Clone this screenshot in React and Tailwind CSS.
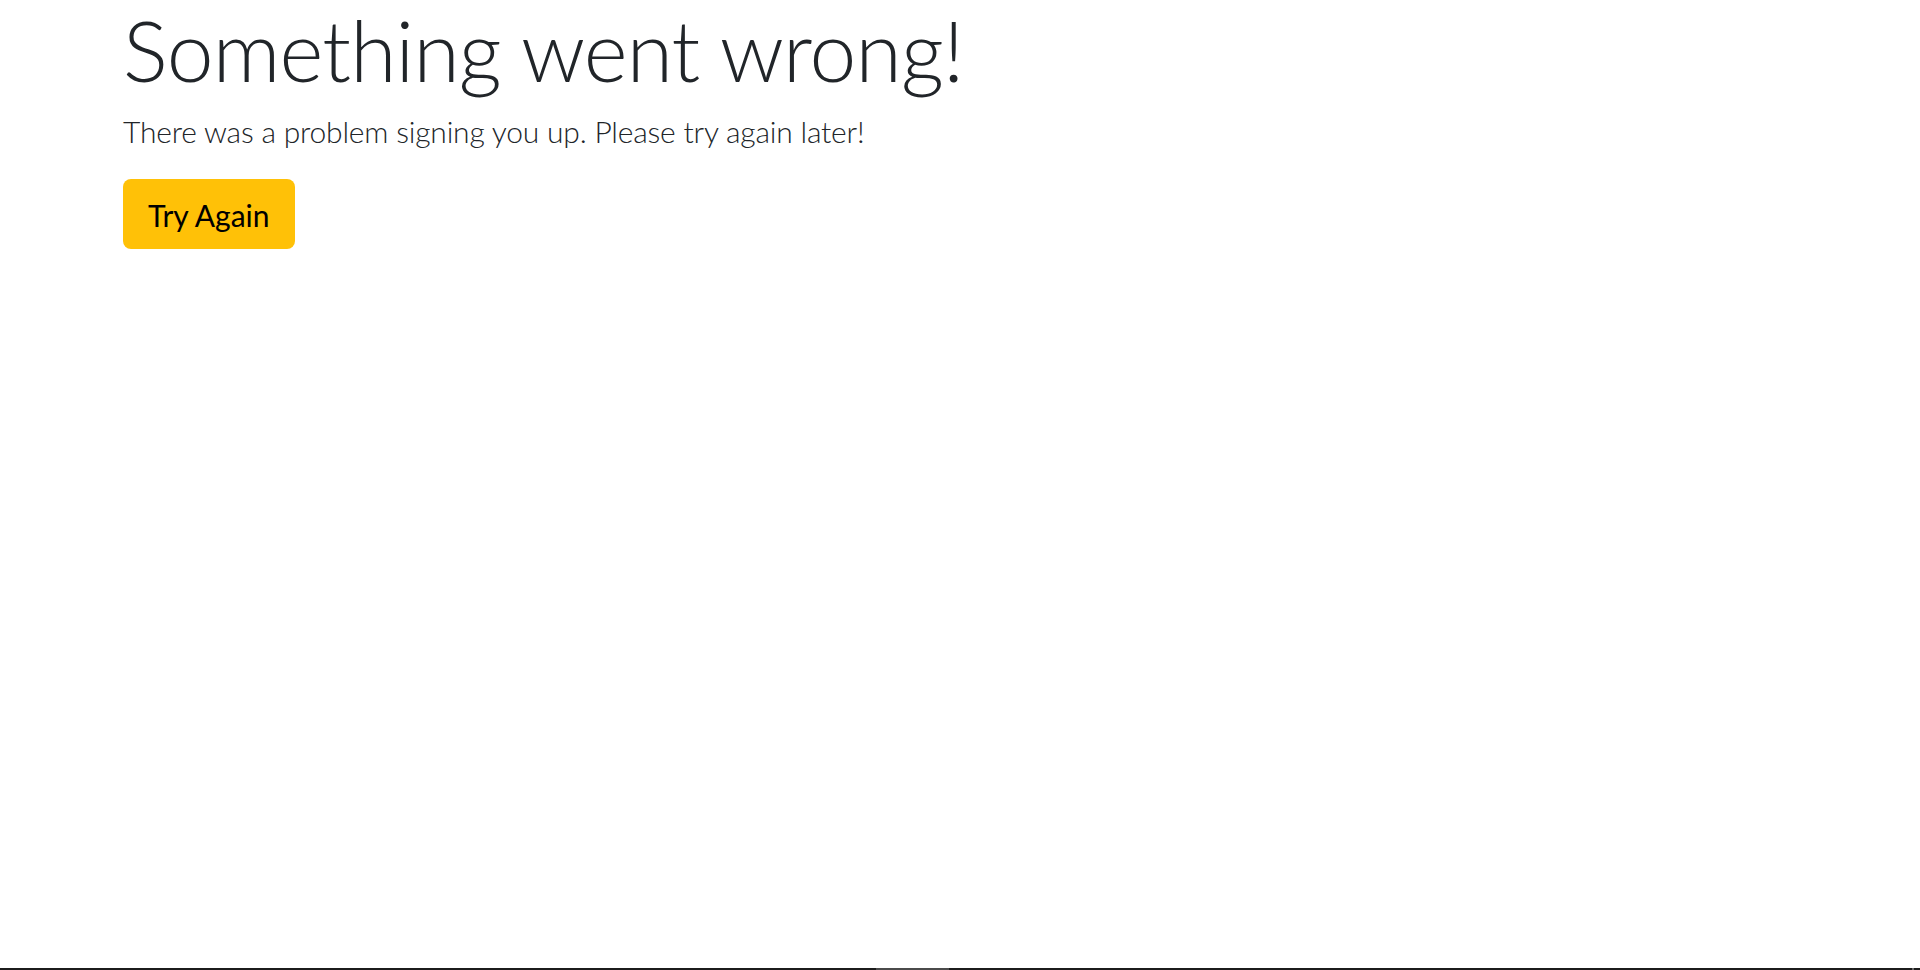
import React from 'react';

export default function App() {
  return (
    <div className="flex min-h-screen flex-col bg-white text-[#212529] font-['Lato',sans-serif]">
      <main className="flex-1">
        <div className="mx-auto w-full max-w-[1710px] px-[18px]">
          <h1 className="mb-[8px] text-[84px] font-light leading-[1.2] tracking-[-0.85px]">Something went wrong!</h1>
          <p className="mb-[25px] text-[30px] font-light leading-[1.5] tracking-[-0.2px]">
            There was a problem signing you up. Please try again later!
          </p>
          <button
            type="button"
            className="rounded-[8px] bg-[#ffc107] px-[25px] pt-[13px] pb-[11px] text-[30px] leading-[46px] text-black"
          >
            Try Again
          </button>
        </div>
      </main>
      <div className="flex h-[2px] bg-[#1c1c1c]">
        <div className="w-[876px]" />
        <div className="w-[73px] bg-[#4b4b4b]" />
        <div className="flex-1" />
        <div className="w-[2px] bg-[#6b6b6b]" />
        <div className="w-[6px]" />
      </div>
    </div>
  );
}
